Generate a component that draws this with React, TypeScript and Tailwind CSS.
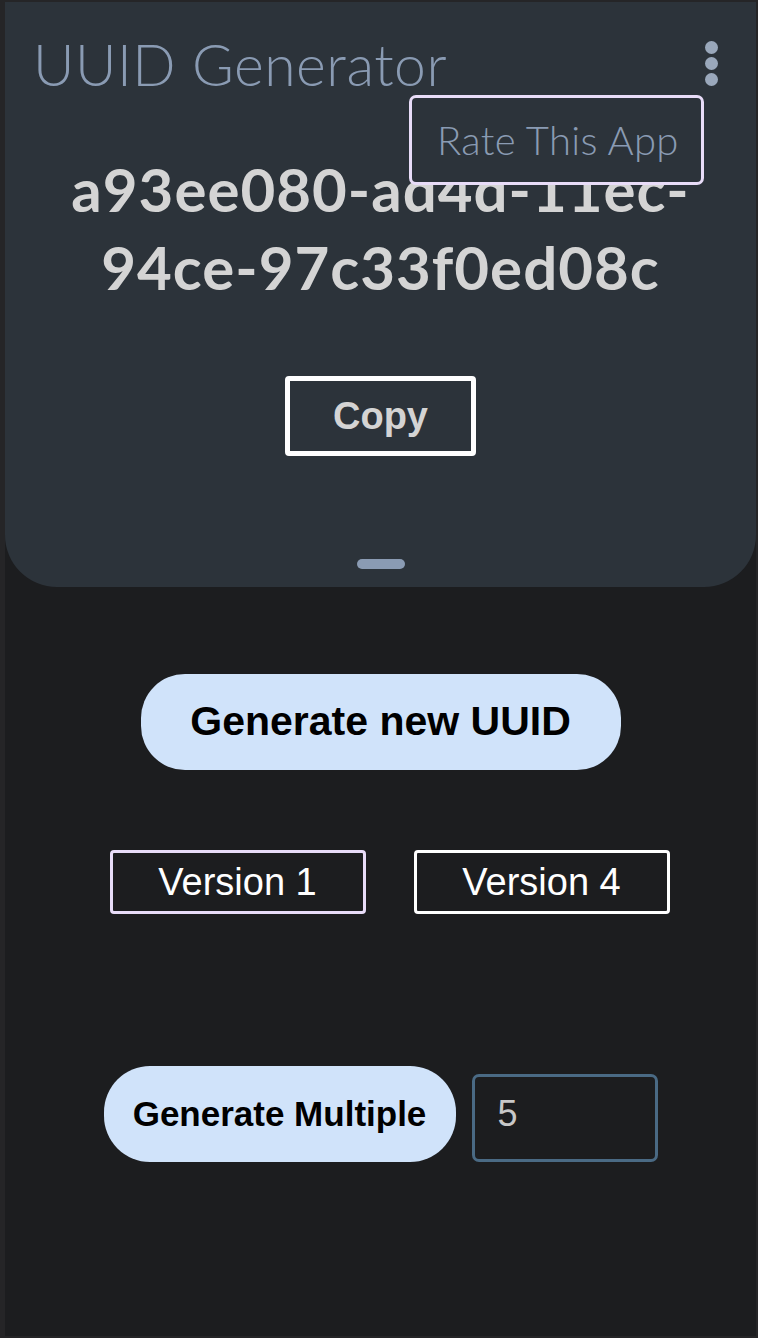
const App = () => {
  const uuid = ["a93ee080-ad4d-11ec-", "94ce-97c33f0ed08c"];

  return (
    <div className="w-[758px] h-[1338px] bg-[#252527] pl-[5px] pt-[2px] pr-[2px] pb-[2px]">
      <div className="h-full bg-[#1c1d1f] flex flex-col">
        <div className="relative bg-[#2c333a] h-[585px] rounded-b-[52px] flex flex-col items-center">
          <div className="w-full flex items-start justify-between pl-[28px] pr-[38px] pt-[30px]">
            <h1 className="text-[#8a9bb3] text-[57px] font-light leading-[64px] font-['Lato',sans-serif] tracking-[0.5px]">
              UUID Generator
            </h1>
            <div className="flex flex-col gap-[3px] pt-[9px]">
              <span className="w-[13px] h-[13px] rounded-full bg-[#9aa8bb]" />
              <span className="w-[13px] h-[13px] rounded-full bg-[#9aa8bb]" />
              <span className="w-[13px] h-[13px] rounded-full bg-[#9aa8bb]" />
            </div>
          </div>

          <div className="mt-[54px] text-center text-[#d4d4d4] font-bold text-[60px] leading-[78px] tracking-[1px] font-['Lato',sans-serif]">
            {uuid.map((line) => (
              <div key={line}>{line}</div>
            ))}
          </div>

          <button className="mt-[70px] w-[191px] h-[80px] border-[5px] border-white rounded-[4px] text-[#d4d4d4] font-bold text-[38px] font-['Liberation_Sans',sans-serif]">
            Copy
          </button>

          <div className="absolute bottom-[18px] left-1/2 -translate-x-1/2 w-[48px] h-[10px] rounded-full bg-[#8a9bb3]" />

          <div className="absolute left-[404px] top-[93px] w-[295px] h-[90px] bg-[#2c333a] border-[3px] border-[#e8dcf8] rounded-[7px] flex items-center pl-[25px]">
            <span className="text-[#8a9bb3] text-[40px] font-light font-['Lato',sans-serif] tracking-[0.3px]">
              Rate This App
            </span>
          </div>
        </div>

        <div className="flex flex-col items-center">
          <button className="mt-[87px] w-[480px] h-[96px] rounded-[44px] bg-[#d0e3fa] text-black font-bold text-[41px] font-['Liberation_Sans',sans-serif]">
            Generate new UUID
          </button>

          <div className="mt-[80px] flex gap-[48px] pl-[18px]">
            <button className="w-[256px] h-[64px] border-[3px] border-[#e8dcf8] rounded-[4px] text-white text-[38px] font-['Liberation_Sans',sans-serif]">
              Version 1
            </button>
            <button className="w-[256px] h-[64px] border-[3px] border-white rounded-[4px] text-white text-[38px] font-['Liberation_Sans',sans-serif]">
              Version 4
            </button>
          </div>

          <div className="mt-[152px] flex items-end gap-[16px]">
            <button className="w-[352px] h-[96px] rounded-[46px] bg-[#d0e3fa] text-black font-bold text-[35px] font-['Liberation_Sans',sans-serif]">
              Generate Multiple
            </button>
            <div className="w-[186px] h-[88px] border-[3px] border-[#4a6a84] rounded-[7px] pl-[23px] pt-[10px] text-[#c8c8c8] text-[36px] font-['Liberation_Sans',sans-serif]">
              5
            </div>
          </div>
        </div>
      </div>
    </div>
  );
};

export default App;
